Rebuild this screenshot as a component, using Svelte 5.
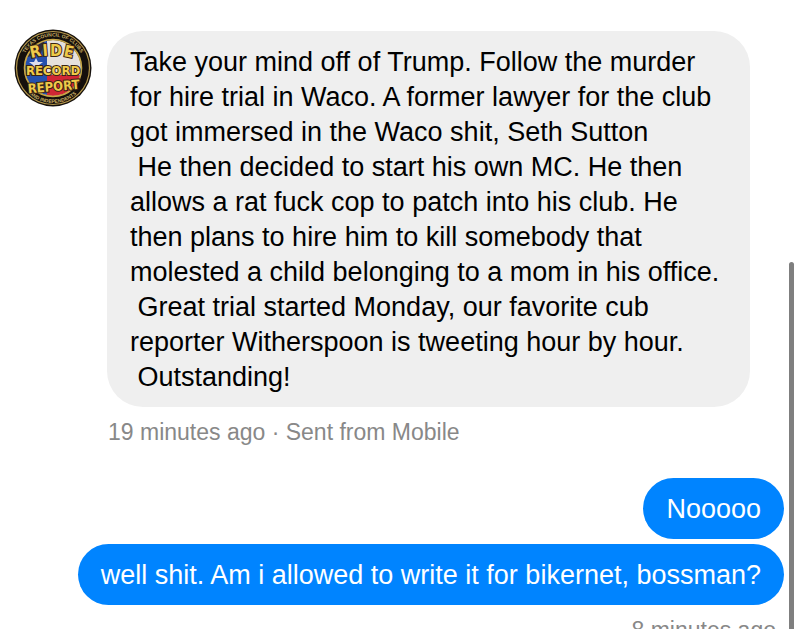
<script lang="ts">
    type Message = { id: number; text: string };

    const received: Message[] = [
        {
            id: 1,
            text:
                "Take your mind off of Trump. Follow the murder for hire trial in Waco. A former lawyer for the club got immersed in the Waco shit, Seth Sutton\n" +
                " He then decided to start his own MC. He then allows a rat fuck cop to patch into his club. He then plans to hire him to kill somebody that molested a child belonging to a mom in his office.\n" +
                " Great trial started Monday, our favorite cub reporter Witherspoon is tweeting hour by hour.\n" +
                " Outstanding!",
        },
    ];

    const sent: Message[] = [
        { id: 2, text: "Nooooo" },
        { id: 3, text: "well shit. Am i allowed to write it for bikernet, bossman?" },
    ];
</script>

<main class="thread">
    <section class="group received">
        <svg class="avatar" viewBox="0 0 78 78" role="img" aria-label="Ride Record Report">
            <defs>
                <clipPath id="disc"><circle cx="39" cy="39" r="28" /></clipPath>
                <path id="arc-top" d="M7.5 39a31.5 31.5 0 0 1 63 0" />
                <path id="arc-bottom" d="M4 39a35 35 0 0 0 70 0" />
            </defs>
            <circle cx="39" cy="39" r="38.5" fill="#15100c" />
            <circle cx="39" cy="39" r="36.5" fill="none" stroke="#b5984c" stroke-width="1.2" />
            <g clip-path="url(#disc)">
                <rect width="78" height="78" fill="#e6e1dc" />
                <path d="M0 0h33v78H0z" fill="#2550ae" />
                <path d="M33 46h45v32H33z" fill="#d02735" />
                <path d="M8 8h24l-5 16-17 5z" fill="#302b38" />
                <path d="M22 29l2 4 5 0-4 3 2 5-5-3-4 3 1-5-4-3 5 0z" fill="#dde" />
            </g>
            <circle cx="39" cy="39" r="28.5" fill="none" stroke="#c9a846" stroke-width="1.6" />
            <g class="ring">
                <text><textPath href="#arc-top" startOffset="50%">TEXAS COUNCIL OF CLUBS</textPath></text>
                <text><textPath href="#arc-bottom" startOffset="50%">AND INDEPENDENTS</textPath></text>
            </g>
            <g class="name">
                <text x="17" y="29" transform="rotate(-12 17 29)">R</text>
                <text x="29" y="27" transform="rotate(-5 29 27)">I</text>
                <text x="36" y="27">D</text>
                <text x="49" y="27" transform="rotate(12 49 27)">E</text>
                <text x="39" y="46" class="middle">RECORD</text>
                <text x="40" y="62" class="middle" transform="rotate(-5 40 62)">REPORT</text>
            </g>
        </svg>
        <div class="stack">
            {#each received as message (message.id)}
                <p class="bubble">{message.text}</p>
            {/each}
            <p class="meta">19 minutes ago · Sent from Mobile</p>
        </div>
    </section>

    <section class="group sent">
        <div class="stack">
            {#each sent as message (message.id)}
                <p class="bubble">{message.text}</p>
            {/each}
            <p class="meta">8 minutes ago</p>
        </div>
    </section>

    <div class="scroll-thumb"></div>
</main>

<style>
    :global(body) {
        margin: 0;
        background: #fff;
    }

    .thread {
        position: relative;
        box-sizing: border-box;
        height: 100vh;
        overflow: hidden;
        padding: 29px 16px 0 14px;
        font-family: "Liberation Sans", Arial, sans-serif;
        font-size: 27px;
        line-height: 35px;
        color: #000;
    }

    .group {
        display: flex;
        align-items: flex-start;
    }

    .received {
        gap: 15px;
        padding-right: 34px;
        margin-bottom: 25px;
    }

    .avatar {
        flex: none;
        width: 78px;
        height: 78px;
    }

    .ring {
        font-size: 5px;
        font-weight: 700;
        fill: #cbb067;
        text-anchor: middle;
    }

    .name {
        font-family: "Liberation Sans Narrow", "DejaVu Sans Condensed", sans-serif;
        font-size: 16px;
        font-weight: 700;
        fill: #efca4a;
        stroke: #3a2412;
        stroke-width: 2;
        paint-order: stroke;
    }

    .name .middle {
        font-size: 13px;
        text-anchor: middle;
    }

    .stack {
        display: flex;
        flex-direction: column;
        gap: 5px;
        min-width: 0;
    }

    .received .stack {
        flex: 1;
        padding-top: 2px;
    }

    .sent {
        justify-content: flex-end;
    }

    .sent .stack {
        align-items: flex-end;
    }

    .bubble {
        margin: 0;
        padding: 14px 23px 12px;
        border-radius: 36px;
        white-space: pre-wrap;
    }

    .received .bubble {
        background: #efefef;
    }

    .sent .bubble {
        background: #0084ff;
        color: #fff;
    }

    .meta {
        margin: 0;
        padding: 3px 1px;
        font-size: 23px;
        color: #888;
    }

    .sent .meta {
        padding-right: 8px;
    }

    .scroll-thumb {
        position: absolute;
        top: 262px;
        right: 6px;
        bottom: 0;
        width: 5px;
        border-radius: 3px 3px 0 0;
        background: #7f7f7f;
    }
</style>
